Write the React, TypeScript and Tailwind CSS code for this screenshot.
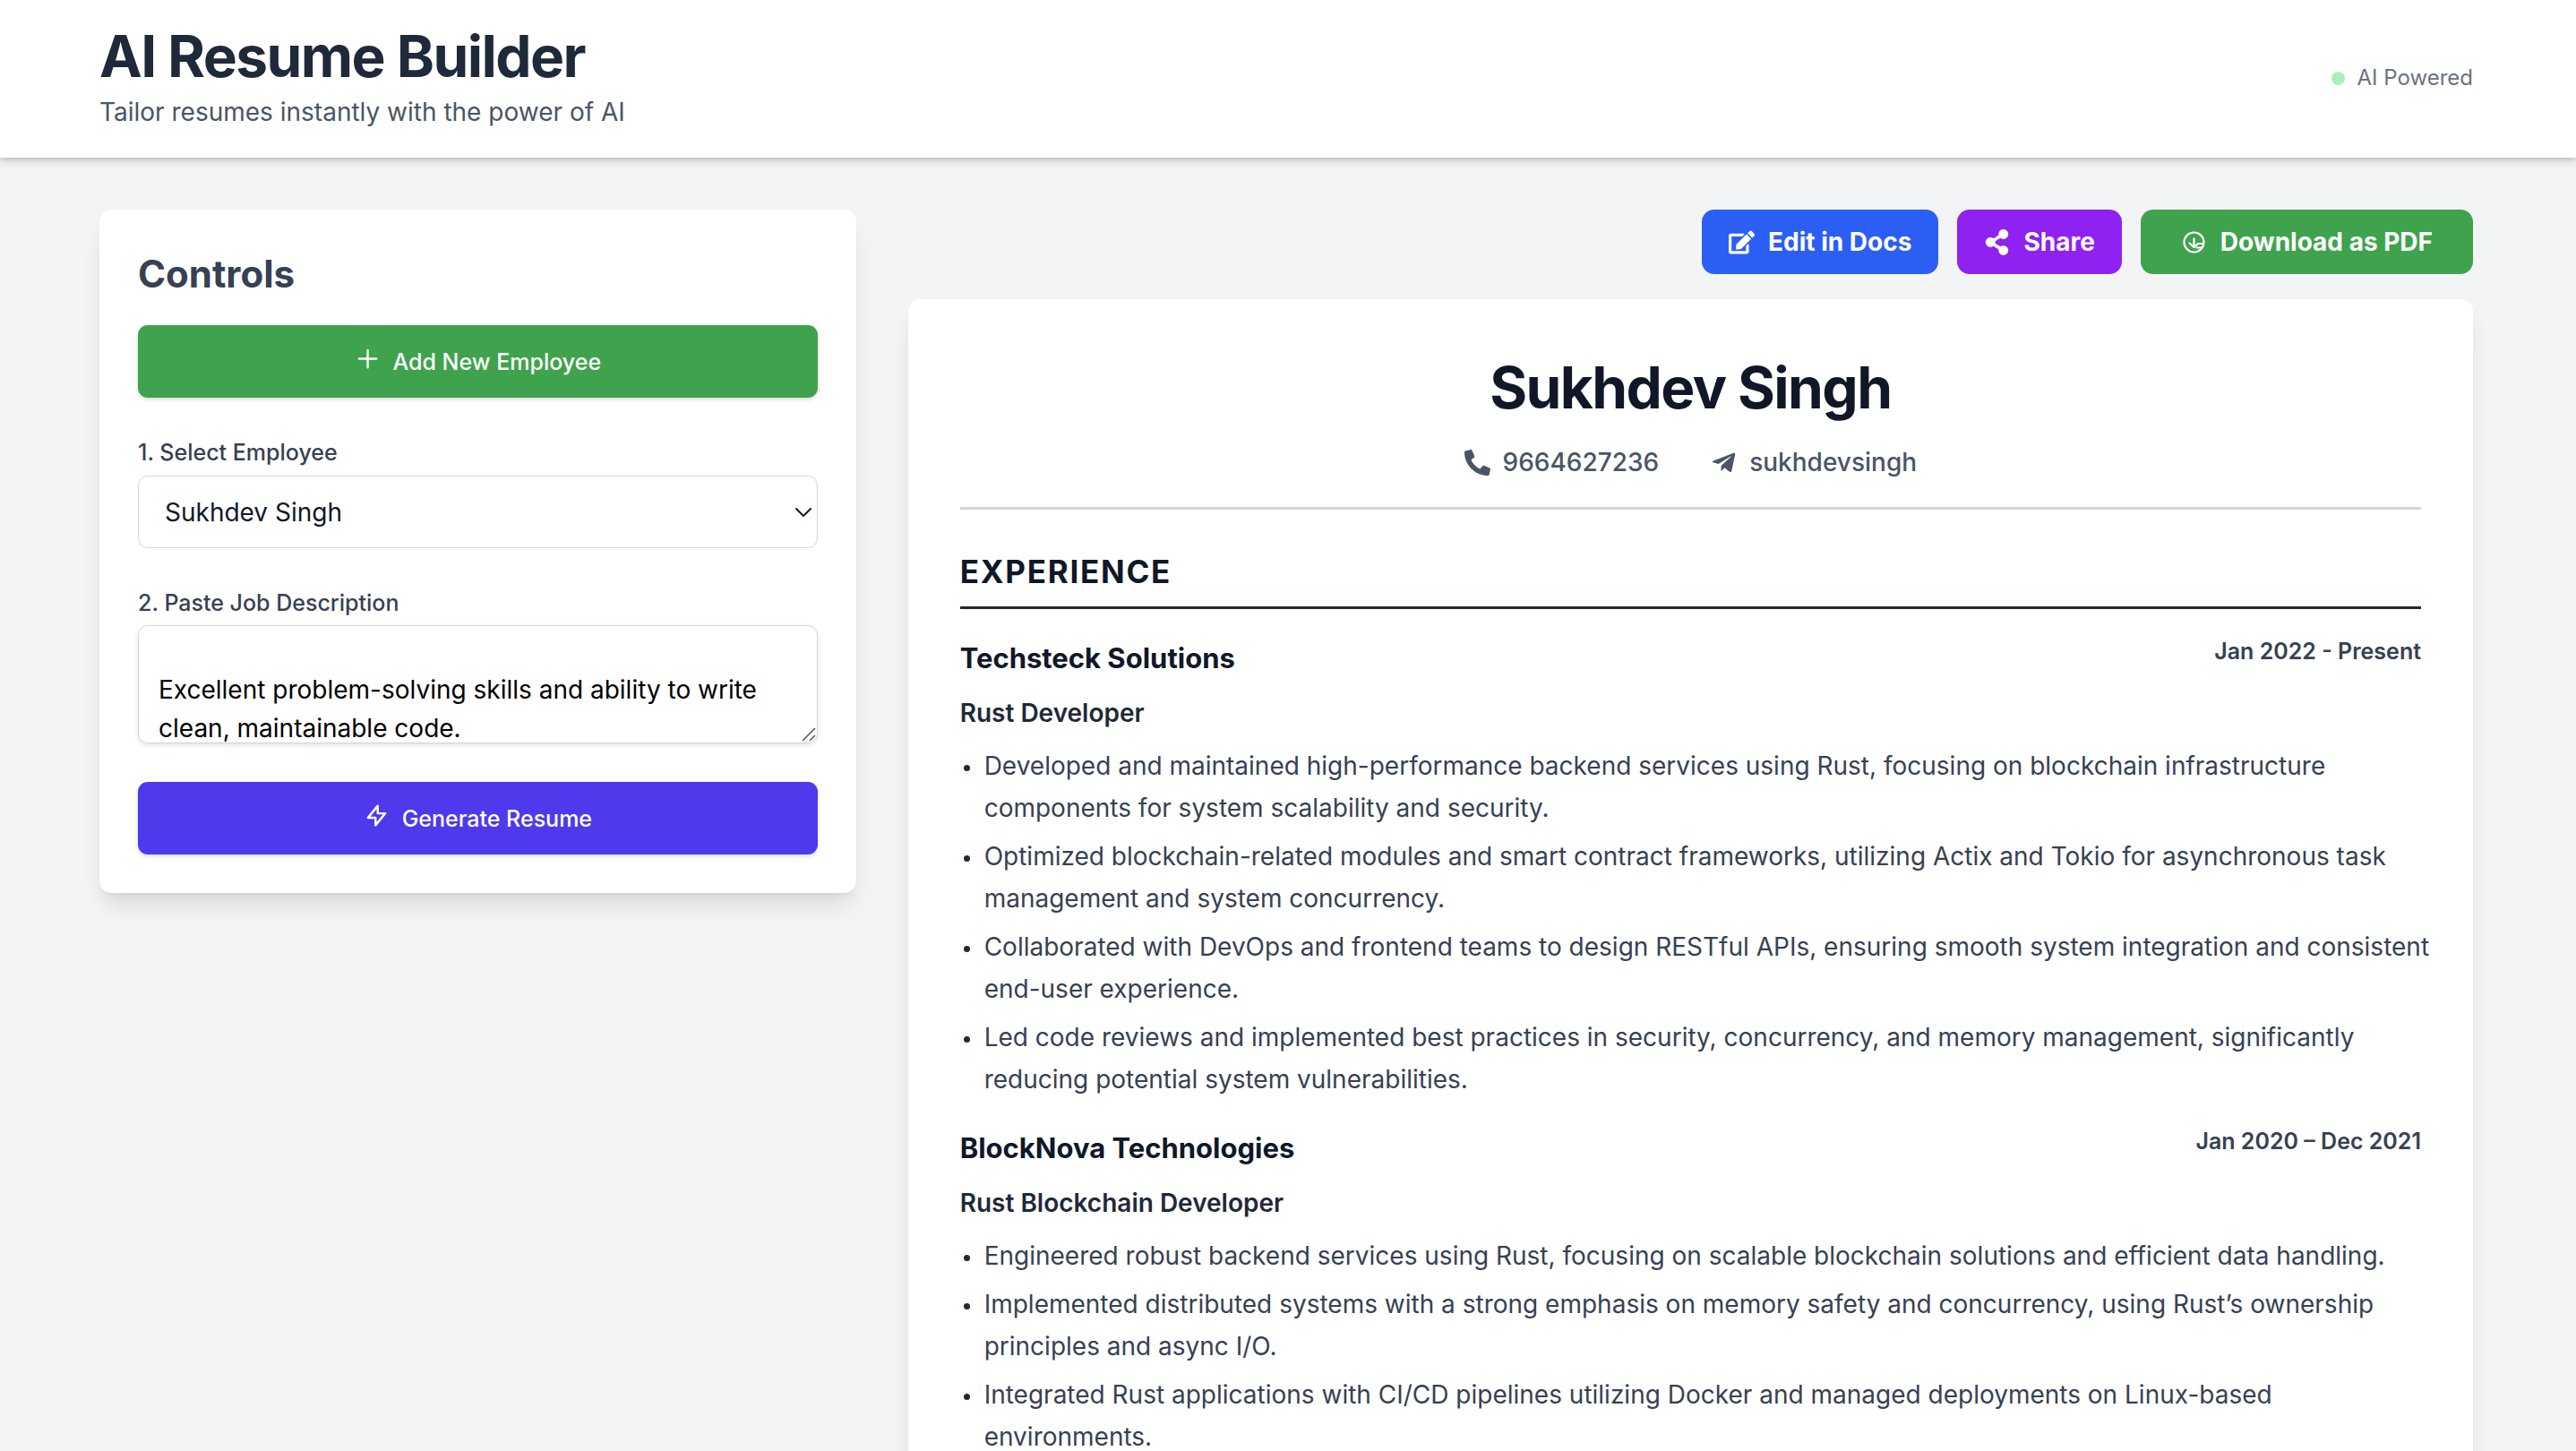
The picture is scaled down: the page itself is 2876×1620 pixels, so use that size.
import { useEffect, useRef } from "react";
import { FaEdit, FaShareAlt, FaPhoneAlt, FaTelegramPlane } from "react-icons/fa";
import { ChevronDown } from "lucide-react";

type Job = { company: string; role: string; dates: string; points: string[] };

const jobs: Job[] = [
  {
    company: "Techsteck Solutions",
    role: "Rust Developer",
    dates: "Jan 2022 - Present",
    points: [
      "Developed and maintained high-performance backend services using Rust, focusing on blockchain infrastructure components for system scalability and security.",
      "Optimized blockchain-related modules and smart contract frameworks, utilizing Actix and Tokio for asynchronous task management and system concurrency.",
      "Collaborated with DevOps and frontend teams to design RESTful APIs, ensuring smooth system integration and consistent end-user experience.",
      "Led code reviews and implemented best practices in security, concurrency, and memory management, significantly reducing potential system vulnerabilities.",
    ],
  },
  {
    company: "BlockNova Technologies",
    role: "Rust Blockchain Developer",
    dates: "Jan 2020 – Dec 2021",
    points: [
      "Engineered robust backend services using Rust, focusing on scalable blockchain solutions and efficient data handling.",
      "Implemented distributed systems with a strong emphasis on memory safety and concurrency, using Rust’s ownership principles and async I/O.",
      "Integrated Rust applications with CI/CD pipelines utilizing Docker and managed deployments on Linux-based environments.",
    ],
  },
];

const jobDescription =
  "\nExcellent problem-solving skills and ability to write clean, maintainable code.";

function Header() {
  return (
    <header className="relative bg-white pr-1 shadow-[0_4px_11px_rgba(0,0,0,0.14),0_2px_4px_rgba(0,0,0,0.12)]">
      <div className="mx-auto flex max-w-[2766px] items-center justify-between px-[58px] pt-[25px] pb-[27px]">
        <div>
          <h1 className="text-[64px] leading-[76px] font-bold tracking-tight text-gray-800">AI Resume Builder</h1>
          <p className="text-[28px] leading-[48px] text-gray-600">Tailor resumes instantly with the power of AI</p>
        </div>
        <div className="flex items-center gap-[14px]">
          <span className="size-[15px] rounded-full bg-[#aeedbb]" />
          <span className="text-[24px] leading-9 text-gray-500">AI Powered</span>
        </div>
      </div>
    </header>
  );
}

function OutlineIcon({ d }: { d: string }) {
  return (
    <svg viewBox="0 0 24 24" className="mb-2 size-[29px]" fill="none" stroke="currentColor" strokeWidth="2" strokeLinecap="round" strokeLinejoin="round" aria-hidden="true">
      <path d={d} />
    </svg>
  );
}

function Controls() {
  const area = useRef<HTMLTextAreaElement>(null);
  useEffect(() => {
    if (area.current) area.current.scrollTop = 5;
  }, []);
  return (
    <section className="flex flex-col gap-[43px] rounded-[14px] bg-white p-[43px] shadow-[0_18px_27px_-5px_rgba(0,0,0,0.1),0_7px_11px_-7px_rgba(0,0,0,0.1)]">
      <div>
        <h2 className="mb-7 text-[42px] leading-[58px] font-bold text-gray-700">Controls</h2>
        <button className="flex h-[81px] w-full items-center justify-center gap-[14px] rounded-[11px] bg-[#3fa34d] pt-0.5 text-[25px] font-medium text-white shadow-[0_2px_5px_rgba(0,0,0,0.15)]">
          <OutlineIcon d="M12 4v16m8-8H4" />
          Add New Employee
        </button>
      </div>
      <div>
        <label htmlFor="employee" className="mb-[7px] block text-[25px] leading-[37px] font-medium text-gray-700">
          1. Select Employee
        </label>
        <div className="grid items-center">
          <select
            id="employee"
            className="col-start-1 row-start-1 h-[81px] w-full appearance-none rounded-[11px] border border-gray-300 bg-white px-[29px] text-[28px] text-gray-900"
          >
            <option>Sukhdev Singh</option>
          </select>
          <ChevronDown strokeWidth={1.5} className="pointer-events-none col-start-1 row-start-1 size-8 justify-self-end text-gray-900" />
        </div>
      </div>
      <div>
        <label htmlFor="job" className="mb-[7px] block text-[25px] leading-9 font-medium text-gray-700">
          2. Paste Job Description
        </label>
        <div className="relative">
          <textarea
            id="job"
            ref={area}
            defaultValue={jobDescription}
            className="block h-[132px] w-full resize-none rounded-[11px] border border-gray-300 px-[22px] py-3 text-[28px] leading-[43px] text-black shadow-[0_2px_5px_rgba(0,0,0,0.12)] [scrollbar-width:none]"
          />
          <svg viewBox="0 0 16 16" className="pointer-events-none absolute right-0.5 bottom-0.5 size-4 text-gray-600" fill="none" stroke="currentColor" strokeWidth="1.5" aria-hidden="true">
            <path d="M1 15L15 1M9 15l6-6" />
          </svg>
        </div>
      </div>
      <button className="flex h-[81px] w-full items-center justify-center gap-[14px] rounded-[11px] bg-[#4d3aec] pt-0.5 text-[25px] font-medium text-white shadow-[0_2px_5px_rgba(0,0,0,0.15)]">
        <OutlineIcon d="M13 10V3L4 14h7v7l9-11h-7z" />
        Generate Resume
      </button>
    </section>
  );
}

function DownloadIcon() {
  return (
    <svg viewBox="0 0 29 29" className="size-[29px]" fill="none" stroke="currentColor" strokeWidth="2.2" strokeLinecap="round" strokeLinejoin="round" aria-hidden="true">
      <circle cx="14.5" cy="14.5" r="11" />
      <path d="M14.5 10.5v9M9.5 15.5l5 4.5 4.5-4h6M17.5 20.5h5" />
    </svg>
  );
}

function Actions() {
  return (
    <div className="flex justify-end gap-[21px] text-[28px] leading-[43px] font-bold text-white">
      <button className="flex h-18 items-center gap-[15px] rounded-[14px] bg-[#2b5ef3] px-[30px]">
        <FaEdit className="size-[29px]" />
        Edit in Docs
      </button>
      <button className="flex h-18 items-center gap-[15px] rounded-[14px] bg-[#8f22f0] px-[30px]">
        <FaShareAlt className="size-[29px]" />
        Share
      </button>
      <button className="flex h-18 items-center gap-[15px] rounded-[14px] bg-[#3fa34d] px-[45px]">
        <DownloadIcon />
        Download as PDF
      </button>
    </div>
  );
}

function Entry({ job }: { job: Job }) {
  return (
    <article>
      <div className="flex items-start justify-between">
        <h3 className="text-[31px] leading-[52px] font-bold text-gray-900">{job.company}</h3>
        <span className="text-[25px] leading-9 font-semibold text-gray-700">{job.dates}</span>
      </div>
      <p className="my-3 text-[28px] leading-[47px] font-semibold text-gray-800">{job.role}</p>
      <ul className="-mr-3 flex flex-col gap-[7px]">
        {job.points.map((point) => (
          <li key={point} className="flex text-[28px] leading-[47px] text-gray-700">
            <span className="mt-[22px] mr-4 ml-1 size-[7px] shrink-0 rounded-full bg-gray-800" />
            <span>{point}</span>
          </li>
        ))}
      </ul>
    </article>
  );
}

function Resume() {
  return (
    <section className="rounded-[14px] bg-white p-[58px] shadow-[0_18px_27px_-5px_rgba(0,0,0,0.1),0_7px_11px_-7px_rgba(0,0,0,0.1)]">
      <header className="flex flex-col items-center border-b-3 border-gray-300 pb-[25px]">
        <h2 className="text-[64px] leading-[81px] font-bold tracking-tight text-gray-900">Sukhdev Singh</h2>
        <div className="mt-[18px] flex gap-[58px] text-[28px] leading-[50px] font-medium text-gray-600">
          <span className="flex items-center gap-[14px]">
            <FaPhoneAlt className="size-[29px]" />
            9664627236
          </span>
          <span className="flex items-center gap-[14px]">
            <FaTelegramPlane className="size-[29px]" />
            sukhdevsingh
          </span>
        </div>
      </header>
      <h2 className="mt-[43px] border-b-3 border-gray-800 pb-3 text-[35px] leading-[53px] font-bold tracking-wider text-gray-900">
        EXPERIENCE
      </h2>
      <div className="mt-[29px] flex flex-col gap-[27px]">
        {jobs.map((job) => (
          <Entry key={job.company} job={job} />
        ))}
      </div>
    </section>
  );
}

export default function App() {
  return (
    <div className="h-screen overflow-hidden bg-gray-100 font-['Inter',sans-serif]">
      <Header />
      <div className="pr-1">
        <main className="mx-auto grid max-w-[2766px] grid-cols-3 items-start gap-[58px] px-[58px] pt-[58px]">
          <Controls />
          <div className="col-span-2 flex flex-col gap-7">
            <Actions />
            <Resume />
          </div>
        </main>
      </div>
    </div>
  );
}
